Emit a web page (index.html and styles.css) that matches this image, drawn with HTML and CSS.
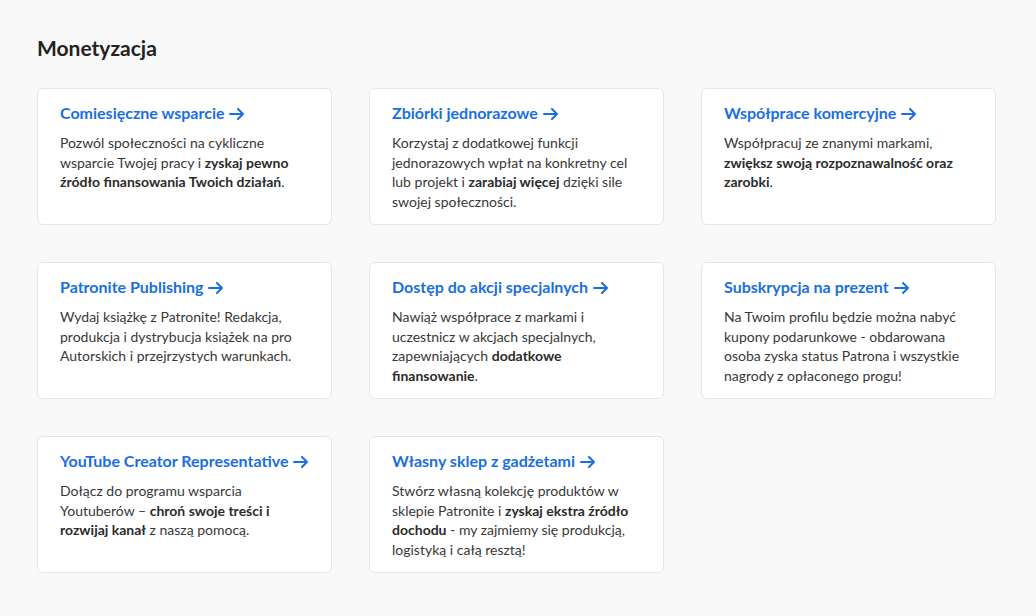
FILE: index.html
```html
<!DOCTYPE html>
<html lang="pl">
<head>
<meta charset="utf-8">
<title>Monetyzacja</title>
<link rel="stylesheet" href="styles.css">
</head>
<body>
<main class="page">
  <h1 class="title">Monetyzacja</h1>
  <div class="grid">
    <a class="card" href="#">
      <h2 class="card-title">Comiesięczne wsparcie <svg class="arrow" viewBox="0 0 16 12"><path d="M1 6h13M9 1l5 5-5 5"/></svg></h2>
      <p class="card-text">Pozwól społeczności na cykliczne wsparcie Twojej pracy i <b>zyskaj pewno źródło finansowania Twoich działań</b>.</p>
    </a>
    <a class="card" href="#">
      <h2 class="card-title">Zbiórki jednorazowe <svg class="arrow" viewBox="0 0 16 12"><path d="M1 6h13M9 1l5 5-5 5"/></svg></h2>
      <p class="card-text">Korzystaj z dodatkowej funkcji jednorazowych wpłat na konkretny cel lub projekt i <b>zarabiaj więcej</b> dzięki sile swojej społeczności.</p>
    </a>
    <a class="card" href="#">
      <h2 class="card-title">Współprace komercyjne <svg class="arrow" viewBox="0 0 16 12"><path d="M1 6h13M9 1l5 5-5 5"/></svg></h2>
      <p class="card-text">Współpracuj ze znanymi markami, <b>zwiększ swoją rozpoznawalność oraz zarobki</b>.</p>
    </a>
    <a class="card" href="#">
      <h2 class="card-title">Patronite Publishing <svg class="arrow" viewBox="0 0 16 12"><path d="M1 6h13M9 1l5 5-5 5"/></svg></h2>
      <p class="card-text">Wydaj książkę z Patronite! Redakcja, produkcja i dystrybucja książek na pro Autorskich i przejrzystych warunkach.</p>
    </a>
    <a class="card" href="#">
      <h2 class="card-title">Dostęp do akcji specjalnych <svg class="arrow" viewBox="0 0 16 12"><path d="M1 6h13M9 1l5 5-5 5"/></svg></h2>
      <p class="card-text">Nawiąż współprace z markami i uczestnicz w akcjach specjalnych, zapewniających <b>dodatkowe finansowanie</b>.</p>
    </a>
    <a class="card" href="#">
      <h2 class="card-title">Subskrypcja na prezent <svg class="arrow" viewBox="0 0 16 12"><path d="M1 6h13M9 1l5 5-5 5"/></svg></h2>
      <p class="card-text">Na Twoim profilu będzie można nabyć kupony podarunkowe - obdarowana osoba zyska status Patrona i wszystkie nagrody z opłaconego progu!</p>
    </a>
    <a class="card" href="#">
      <h2 class="card-title">YouTube Creator Representative <svg class="arrow" viewBox="0 0 16 12"><path d="M1 6h13M9 1l5 5-5 5"/></svg></h2>
      <p class="card-text">Dołącz do programu wsparcia Youtuberów – <b>chroń swoje treści i rozwijaj kanał</b> z naszą pomocą.</p>
    </a>
    <a class="card" href="#">
      <h2 class="card-title">Własny sklep z gadżetami <svg class="arrow" viewBox="0 0 16 12"><path d="M1 6h13M9 1l5 5-5 5"/></svg></h2>
      <p class="card-text">Stwórz własną kolekcję produktów w sklepie Patronite i <b>zyskaj ekstra źródło dochodu</b> - my zajmiemy się produkcją, logistyką i całą resztą!</p>
    </a>
  </div>
</main>
</body>
</html>
```

FILE: styles.css
```css
* { box-sizing: border-box; }
html, body { margin: 0; padding: 0; }
body {
  background: #f9f9f9;
  font-family: Lato, "Noto Sans", sans-serif;
  color: #333;
}
.page {
  padding: 34px 41px 0 37px;
}
.title {
  margin: 0 0 26px;
  font-size: 21px;
  font-weight: 700;
  color: #222;
  line-height: 28px;
}
.grid {
  display: grid;
  grid-template-columns: repeat(3, 295px);
  grid-auto-rows: 137px;
  column-gap: 37px;
  row-gap: 37px;
}
.card {
  display: block;
  background: #fff;
  border: 1px solid #e6e6e6;
  border-radius: 6px;
  padding: 13px 22px 0 22px;
  text-decoration: none;
  color: #333;
}
.card-title {
  margin: 0 0 9px;
  font-size: 16px;
  font-weight: 700;
  line-height: 22px;
  color: #1a6fe0;
  white-space: nowrap;
}
.arrow {
  width: 16px;
  height: 12px;
  vertical-align: -1px;
  margin-left: 1px;
  fill: none;
  stroke: #1a6fe0;
  stroke-width: 2;
  stroke-linecap: round;
  stroke-linejoin: round;
}
.card-text {
  margin: 0;
  font-size: 14px;
  line-height: 19.5px;
  color: #383838;
}
.card-text b { font-weight: 700; color: #2b2b2b; }
```
